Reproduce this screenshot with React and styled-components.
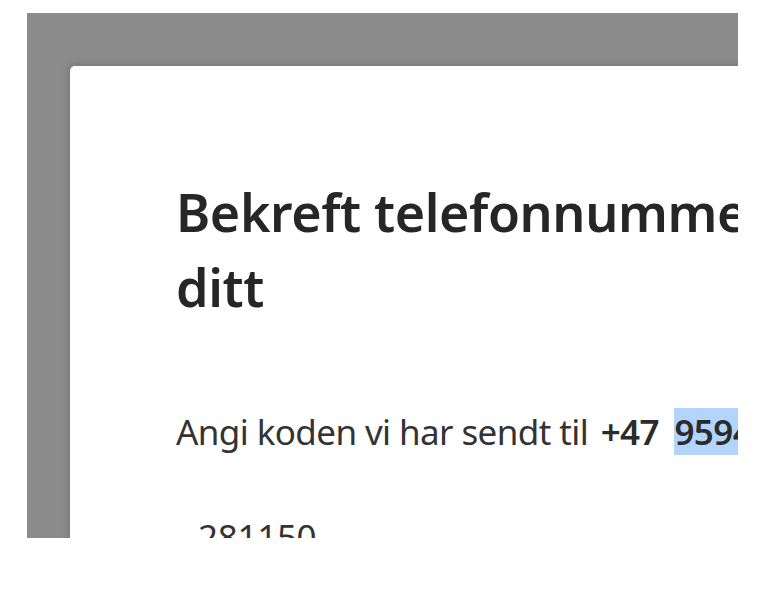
import React from 'react';
import styled, { createGlobalStyle } from 'styled-components';

const GlobalStyle = createGlobalStyle`
  html, body {
    margin: 0;
    padding: 0;
    background: #ffffff;
  }
`

const Frame = styled.div`
  box-sizing: border-box;
  margin: 13px 0 0 27px;
  width: 711px;
  height: 525px;
  overflow: hidden;
  background: #8c8c8c;
  padding: 53px 0 0 43px;
`
const Card = styled.div`
  box-sizing: border-box;
  width: 900px;
  min-height: 600px;
  background: #ffffff;
  border-radius: 5px 0 0 0;
  box-shadow: 0 0 10px rgba(0, 0, 0, 0.22);
  padding: 108px 0 0 106px;
  font-family: "Noto Sans", "Open Sans", sans-serif;
  color: #2b2b2b;
`
const Title = styled.h1`
  margin: 0;
  width: 700px;
  font-size: 52px;
  line-height: 75px;
  font-weight: 600;
  letter-spacing: -0.4px;
  color: #262626;
`
const Lead = styled.p`
  margin: 84px 0 0;
  font-size: 35px;
  line-height: 47px;
  letter-spacing: -0.6px;
  white-space: nowrap;
  color: #333333;
`
const Phone = styled.b`
  margin-left: 4px;
  font-weight: 600;
  color: #2b2b2b;
`
const Selected = styled.span`
  margin-left: 7px;
  background: ${props => props.active ? '#b3d4fc' : 'transparent'};
`
const CodeField = styled.div`
  margin-top: 58px;
  padding-left: 22px;
  font-size: 35px;
  line-height: 47px;
  letter-spacing: -0.3px;
  color: #333333;
`

export default function App() {
  return (
    <>
      <GlobalStyle />
      <Frame>
        <Card>
          <Title>Bekreft telefonnummeret ditt</Title>
          <Lead>
            Angi koden vi har sendt til <Phone>+47 <Selected active>95941234</Selected></Phone>
          </Lead>
          <CodeField>281150</CodeField>
        </Card>
      </Frame>
    </>
  );
}
